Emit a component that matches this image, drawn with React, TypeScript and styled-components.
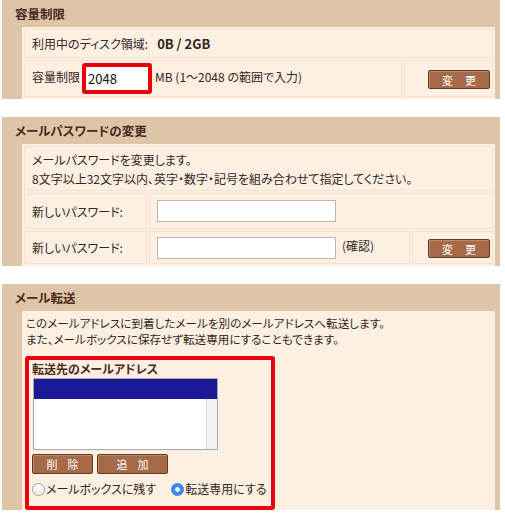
import React from "react";
import styled, { createGlobalStyle } from "styled-components";

const GlobalStyle = createGlobalStyle`
  body {
    margin: 0;
    background: #ffffff;
    font-family: "Noto Sans CJK JP", "Noto Sans", sans-serif;
    color: #36251b;
  }
`;

const Page = styled.div`
  width: 498px;
  padding-left: 2px;
  display: flex;
  flex-direction: column;
  gap: 18px;
`;

const Panel = styled.section`
  background: #dec5a8;
`;

const PanelHeader = styled.h2`
  margin: 0;
  height: 27px;
  padding-left: 13px;
  display: flex;
  align-items: center;
  font-size: 12.5px;
  font-weight: 700;
  color: #4a2b1b;
  font-feature-settings: "palt";
`;

const PanelBody = styled.div`
  margin: 0 5px 0 20px;
  background: #fdf0e3;
  font-size: 12px;
  font-feature-settings: "palt";
`;

const FormTable = styled.table`
  width: 100%;
  border-collapse: separate;
  border-spacing: 2px;
  font-size: 12px;
`;

const Cell = styled.td<{ $h: number; $w?: number; $right?: boolean }>`
  box-sizing: border-box;
  height: ${(p) => p.$h}px;
  width: ${(p) => (p.$w ? `${p.$w}px` : "auto")};
  border: 1px solid #f6e2cf;
  padding: ${(p) => (p.$right ? "0 2px 0 0" : "0 0 0 7px")};
  text-align: ${(p) => (p.$right ? "right" : "left")};
  vertical-align: middle;
  line-height: 19px;
  white-space: nowrap;
`;

const Strong = styled.b`
  margin-left: 9px;
  font-size: 13px;
  font-weight: 700;
`;

const SizeInput = styled.input`
  box-sizing: border-box;
  width: 70px;
  height: 31px;
  margin: 0 3px 0 2px;
  padding: 0 2px;
  border: 4px solid #e8000f;
  border-radius: 3px;
  background: #fff;
  font: 13px "Noto Sans CJK JP", sans-serif;
  color: #111;
  vertical-align: middle;
`;

const TextInput = styled.input`
  box-sizing: border-box;
  width: 179px;
  height: 22px;
  margin-right: 6px;
  border: 1px solid #bdb6ae;
  background: #fff;
  vertical-align: middle;
`;

const BrownButton = styled.button<{ $w: number }>`
  box-sizing: border-box;
  width: ${(p) => p.$w}px;
  height: 19px;
  padding: 0;
  border: 1px solid #5e3b27;
  border-radius: 2px;
  background: #a76a48;
  box-shadow: inset 1px 1px 0 #c08866;
  color: #fff;
  font: 11px "Noto Sans CJK JP", sans-serif;
  letter-spacing: 12px;
  text-indent: 12px;
  vertical-align: middle;
`;

const ForwardBody = styled.div`
  padding: 4px 0 0 3px;
`;

const Note = styled.p`
  margin: 0 0 0 1px;
  font-size: 11.6px;
  line-height: 16px;
`;

const Highlight = styled.div`
  box-sizing: border-box;
  width: 250px;
  margin-top: 9px;
  padding: 1px 0 9px 3px;
  border: 4px solid #e8000f;
  border-radius: 3px;
`;

const ListTitle = styled.div`
  font-weight: 700;
  line-height: 16px;
  color: #4a2b1b;
`;

const ListBox = styled.div`
  box-sizing: border-box;
  position: relative;
  width: 185px;
  height: 72px;
  margin: 1px 0 0 1px;
  border: 1px solid #a7a7a7;
  background: #fff;
`;

const Selected = styled.div`
  height: 20px;
  background: #1a1a98;
`;

const Scrollbar = styled.div`
  position: absolute;
  right: 0;
  top: 20px;
  bottom: 0;
  width: 10px;
  border-left: 1px solid #d9d9d9;
  background: #f4f4f4;
`;

const ButtonRow = styled.div`
  display: flex;
  gap: 4px;
  margin-top: 4px;
`;

const SmallButton = styled(BrownButton)`
  height: 20px;
  letter-spacing: 10px;
  text-indent: 10px;
`;

const RadioRow = styled.div`
  display: flex;
  align-items: center;
  margin-top: 7px;
  line-height: 16px;
  font-size: 12px;
  white-space: nowrap;
`;

const RadioLabel = styled.label`
  display: flex;
  align-items: center;
  gap: 1px;
  & + & {
    margin-left: 15px;
  }
`;

const RadioDot = styled.span<{ $on?: boolean }>`
  box-sizing: border-box;
  flex: none;
  width: 13px;
  height: 13px;
  border-radius: 50%;
  border: 1px solid ${(p) => (p.$on ? "#2f7fe0" : "#9d9d9d")};
  background: ${(p) =>
    p.$on
      ? "radial-gradient(circle, #fff 0 2px, #3b8ef0 2.5px)"
      : "linear-gradient(#ffffff, #ededed)"};
`;

export default function App() {
  return (
    <Page>
      <GlobalStyle />
      <Panel>
        <PanelHeader>容量制限</PanelHeader>
        <PanelBody>
          <FormTable>
            <tbody>
              <tr>
                <Cell $h={29} colSpan={2}>
                  利用中のディスク領域:<Strong>0B / 2GB</Strong>
                </Cell>
              </tr>
              <tr>
                <Cell $h={37}>
                  容量制限
                  <SizeInput defaultValue="2048" />
                  MB (1〜2048 の範囲で入力)
                </Cell>
                <Cell $h={37} $w={89} $right>
                  <BrownButton $w={62}>変更</BrownButton>
                </Cell>
              </tr>
            </tbody>
          </FormTable>
        </PanelBody>
      </Panel>

      <Panel>
        <PanelHeader>メールパスワードの変更</PanelHeader>
        <PanelBody>
          <FormTable>
            <tbody>
              <tr>
                <Cell $h={45} colSpan={3}>
                  メールパスワードを変更します。
                  <br />
                  8文字以上32文字以内、英字・数字・記号を組み合わせて指定してください。
                </Cell>
              </tr>
              <tr>
                <Cell $h={36} $w={123}>
                  新しいパスワード:
                </Cell>
                <Cell $h={36} colSpan={2}>
                  <TextInput type="password" />
                </Cell>
              </tr>
              <tr>
                <Cell $h={33} $w={123}>
                  新しいパスワード:
                </Cell>
                <Cell $h={33}>
                  <TextInput type="password" />
                  (確認)
                </Cell>
                <Cell $h={33} $w={81} $right>
                  <BrownButton $w={62}>変更</BrownButton>
                </Cell>
              </tr>
            </tbody>
          </FormTable>
        </PanelBody>
      </Panel>

      <Panel>
        <PanelHeader>メール転送</PanelHeader>
        <PanelBody>
          <ForwardBody>
            <Note>
              このメールアドレスに到着したメールを別のメールアドレスへ転送します。
              <br />
              また、メールボックスに保存せず転送専用にすることもできます。
            </Note>
            <Highlight>
              <ListTitle>転送先のメールアドレス</ListTitle>
              <ListBox>
                <Selected />
                <Scrollbar />
              </ListBox>
              <ButtonRow>
                <SmallButton $w={61}>削除</SmallButton>
                <SmallButton $w={71}>追加</SmallButton>
              </ButtonRow>
              <RadioRow>
                <RadioLabel>
                  <RadioDot />
                  メールボックスに残す
                </RadioLabel>
                <RadioLabel>
                  <RadioDot $on />
                  転送専用にする
                </RadioLabel>
              </RadioRow>
            </Highlight>
          </ForwardBody>
        </PanelBody>
      </Panel>
    </Page>
  );
}
